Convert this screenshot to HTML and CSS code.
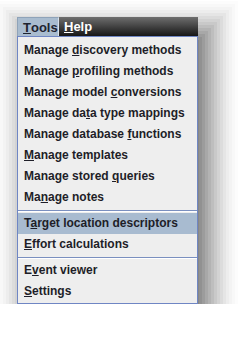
FILE: index.html
```html
<!DOCTYPE html>
<html>
<head>
<meta charset="utf-8">
<link rel="stylesheet" href="styles.css">
</head>
<body>
<div class="menu">
  <div class="menubar">
    <div class="mb-item mb-active"><u>T</u>ools</div>
    <div class="mb-item mb-help"><u>H</u>elp</div>
  </div>
  <div class="popup">
    <div class="item">Manage <u>d</u>iscovery methods</div>
    <div class="item">Manage <u>p</u>rofiling methods</div>
    <div class="item">Manage model <u>c</u>onversions</div>
    <div class="item">Manage da<u>t</u>a type mappings</div>
    <div class="item">Manage database <u>f</u>unctions</div>
    <div class="item"><u>M</u>anage templates</div>
    <div class="item">Manage stored <u>q</u>ueries</div>
    <div class="item">Ma<u>n</u>age notes</div>
    <div class="sep"></div>
    <div class="item selected">T<u>a</u>rget location descriptors</div>
    <div class="item"><u>E</u>ffort calculations</div>
    <div class="sep"></div>
    <div class="item">E<u>v</u>ent viewer</div>
    <div class="item"><u>S</u>ettings</div>
  </div>
</div>
</body>
</html>
```
FILE: styles.css
```css
html, body {
  margin: 0;
  padding: 0;
  background: #ffffff;
}
body {
  padding: 17px 0 0 17px;
  font-family: "Liberation Sans", Arial, sans-serif;
  font-size: 12px;
  font-weight: bold;
  color: #1e1e28;
}
.menu {
  width: 181px;
  box-shadow:
    10px 14px 0 -24px rgba(0, 0, 0, 0.07),
    10px 14px 0 -21px rgba(0, 0, 0, 0.07),
    10px 14px 0 -18px rgba(0, 0, 0, 0.07),
    10px 14px 0 -15px rgba(0, 0, 0, 0.07),
    10px 14px 0 -12px rgba(0, 0, 0, 0.07),
    10px 14px 0 -9px rgba(0, 0, 0, 0.07),
    10px 14px 0 -6px rgba(0, 0, 0, 0.065),
    10px 14px 0 -3px rgba(0, 0, 0, 0.065),
    10px 14px 0 0 rgba(0, 0, 0, 0.06),
    10px 14px 0 3px rgba(0, 0, 0, 0.055),
    10px 14px 0 6px rgba(0, 0, 0, 0.05),
    10px 14px 0 9px rgba(0, 0, 0, 0.045),
    10px 14px 0 12px rgba(0, 0, 0, 0.04),
    10px 14px 0 15px rgba(0, 0, 0, 0.035),
    10px 14px 0 18px rgba(0, 0, 0, 0.03),
    10px 14px 0 21px rgba(0, 0, 0, 0.025),
    10px 14px 0 24px rgba(0, 0, 0, 0.02),
    10px 14px 0 27px rgba(0, 0, 0, 0.015),
    10px 14px 0 30px rgba(0, 0, 0, 0.01);
}
.menubar {
  display: flex;
  height: 19px;
}
.mb-item {
  display: flex;
  align-items: center;
  font-size: 13px;
  line-height: 19px;
  padding: 0 5px;
  box-sizing: border-box;
}
.mb-active {
  width: 42px;
  background: #a9bccf;
  border: 1px solid #8fa3b9;
  border-bottom: none;
  border-right: 1px solid #d8e0ea;
  color: #1e2430;
}
.mb-help {
  flex: 1;
  color: #ffffff;
  background: linear-gradient(#6e6e6e, #161616);
  padding-left: 5px;
}
.popup {
  background: #eeeeee;
  border: 1px solid #6f86c4;
  padding: 3px 0 1px 0;
  display: flex;
  flex-direction: column;
}
.item {
  height: 21px;
  line-height: 21px;
  padding-left: 6px;
  white-space: nowrap;
}
.item u {
  text-decoration-thickness: 1px;
  text-underline-offset: 1px;
}
.selected {
  background: #a8bbd0;
}
.sep {
  height: 5px;
  box-sizing: border-box;
  padding-top: 2px;
}
.sep::before {
  content: "";
  display: block;
  height: 1px;
  background: #7a8fbf;
  border-bottom: 1px solid #ffffff;
}
```
